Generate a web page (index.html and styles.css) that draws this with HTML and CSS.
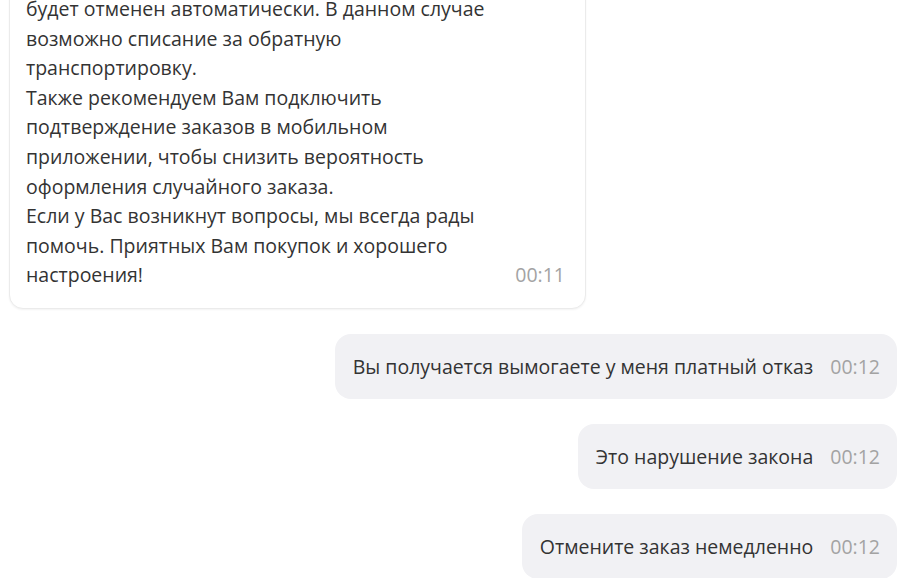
FILE: index.html
```html
<!DOCTYPE html>
<html lang="ru">
<head>
<meta charset="utf-8">
<link rel="stylesheet" href="styles.css">
</head>
<body>
<div class="chat">
  <div class="msg msg-in">
    <div class="msg-text">
      <p>будет отменен автоматически. В данном случае<br>возможно списание за обратную<br>транспортировку.</p>
      <p>Также рекомендуем Вам подключить<br>подтверждение заказов в мобильном<br>приложении, чтобы снизить вероятность<br>оформления случайного заказа.</p>
      <p>Если у Вас возникнут вопросы, мы всегда рады<br>помочь. Приятных Вам покупок и хорошего<br>настроения!</p>
    </div>
    <span class="msg-time">00:11</span>
  </div>
  <div class="msg msg-out">
    <span class="msg-line">Вы получается вымогаете у меня платный отказ</span>
    <span class="msg-time">00:12</span>
  </div>
  <div class="msg msg-out">
    <span class="msg-line">Это нарушение закона</span>
    <span class="msg-time">00:12</span>
  </div>
  <div class="msg msg-out msg-last">
    <span class="msg-line">Отмените заказ немедленно</span>
    <span class="msg-time">00:12</span>
  </div>
</div>
</body>
</html>
```
FILE: styles.css
```css
html, body {
  margin: 0;
  padding: 0;
  background: #ffffff;
}
.chat {
  height: 578px;
  overflow: hidden;
  display: flex;
  flex-direction: column;
  justify-content: flex-end;
  padding: 0 3px 0 9px;
  box-sizing: border-box;
  font-family: "Open Sans", "Noto Sans", sans-serif;
  font-size: 19.5px;
  color: #333333;
}
.msg {
  display: flex;
  flex-shrink: 0;
  box-sizing: border-box;
}
.msg + .msg {
  margin-top: 25px;
}
.msg-in {
  align-self: flex-start;
  width: 577px;
  background: #ffffff;
  border: 1px solid #ebebeb;
  border-radius: 14px;
  box-shadow: 0 1px 2px rgba(0, 0, 0, 0.05);
  padding: 14px 20px 18px 16px;
  justify-content: space-between;
  align-items: flex-end;
  line-height: 29.6px;
}
.msg-text {
  white-space: nowrap;
}
.msg-text p {
  margin: 0;
}
.msg-in .msg-time {
  line-height: 29.6px;
}
.msg-out {
  align-self: flex-end;
  height: 65px;
  background: #f1f1f4;
  border-radius: 16px;
  padding: 0 17px 0 18px;
  align-items: center;
  white-space: nowrap;
}
.msg-last {
  margin-bottom: -1px;
}
.msg-time {
  color: #a3a3a3;
  margin-left: 17px;
  white-space: nowrap;
}
```
